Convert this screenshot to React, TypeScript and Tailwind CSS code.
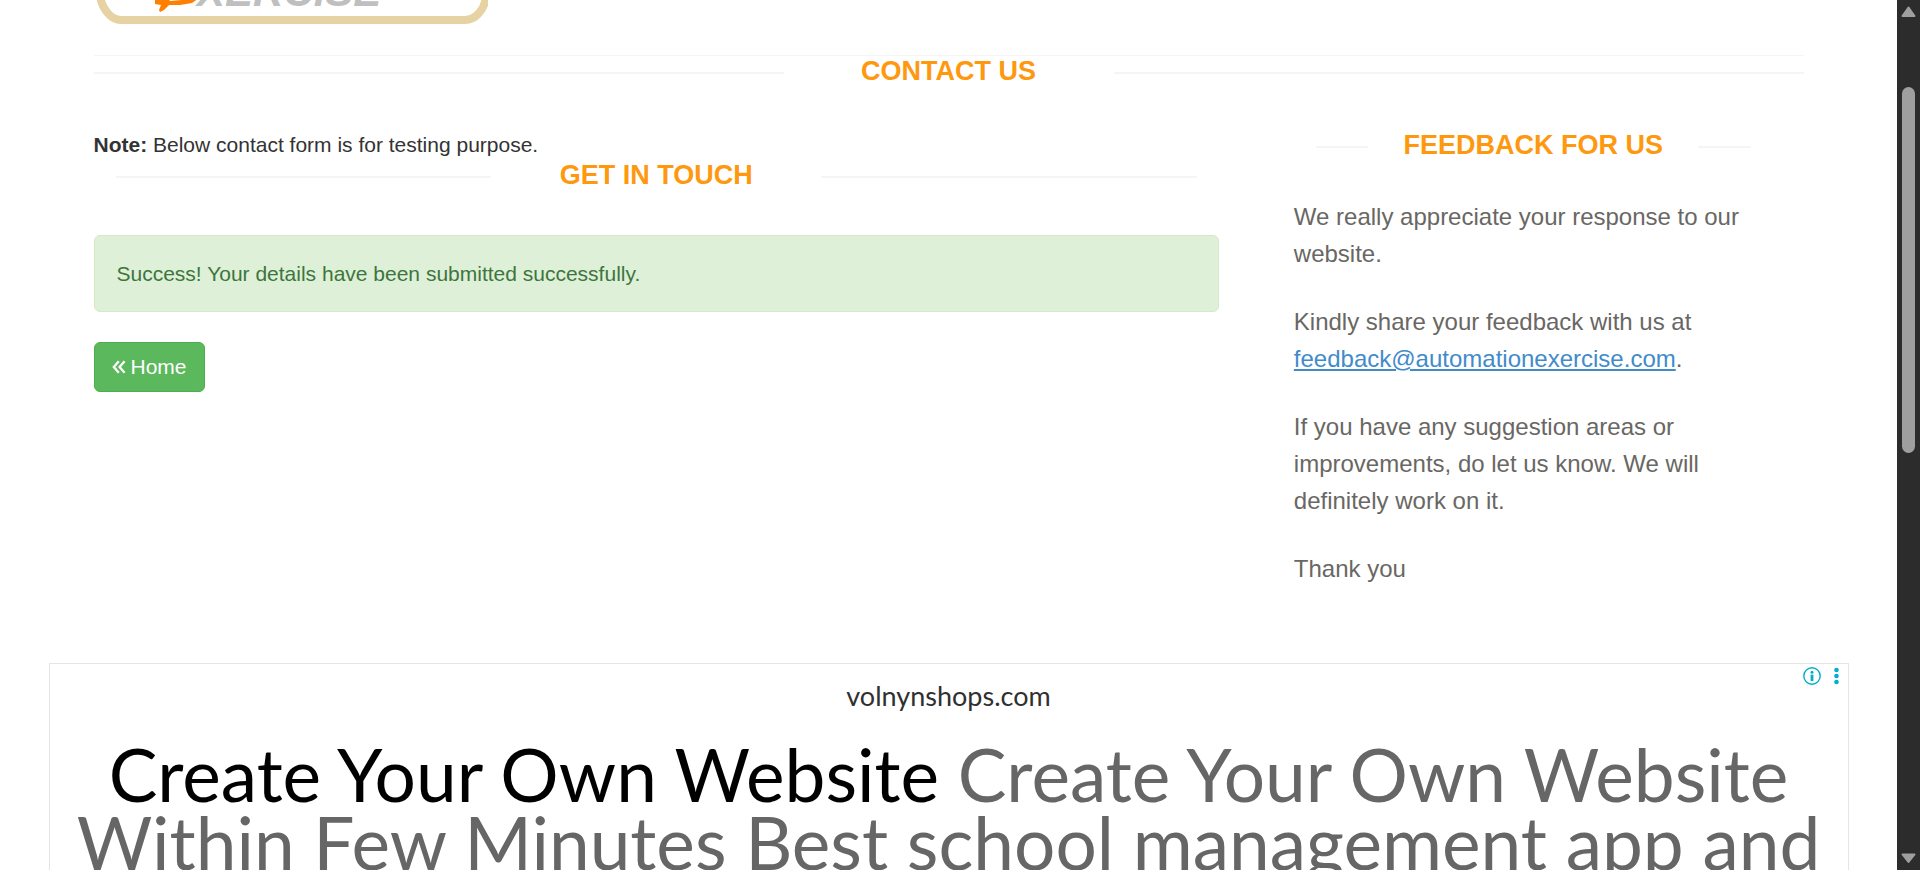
import type { ReactNode } from "react";

function SectionTitle({ children }: { children: ReactNode }) {
  return (
    <div className="flex h-[30px] items-end">
      <span className="mb-3 h-[2px] flex-1 bg-[#f5f5f5]" />
      <h2 className="w-[330px] text-center text-[27px] leading-[30px] font-bold text-[#fe980f] uppercase">
        {children}
      </h2>
      <span className="mb-3 h-[2px] flex-1 bg-[#f5f5f5]" />
    </div>
  );
}

function Logo() {
  return (
    <svg
      className="block"
      width="394"
      height="26"
      viewBox="94 0 394 26"
      role="img"
      aria-label="Automation Exercise"
    >
      <path
        d="M100 -4 C102 9 111 20 121 20 H465 C475 20 485 10 486 -4"
        fill="none"
        stroke="#e6d2a3"
        strokeWidth="8"
      />
      <path
        d="M155 -2 V4 L161 5 L159 10 L160 12 L164 10 L169 5 L180 5 L192 3 L199 -2 H187 L182 0 L170 1 L168 -2 Z"
        fill="#ff7f00"
      />
      <text
        x="197"
        y="6"
        fill="#bfbfbf"
        className="font-['Liberation_Sans',Arial,sans-serif] text-[42px] font-bold italic"
      >
        XERCISE
      </text>
    </svg>
  );
}

function Scrollbar() {
  return (
    <div aria-hidden="true" className="flex w-[23px] shrink-0 flex-col items-center bg-[#2c2c2c]">
      <svg className="my-1 shrink-0" width="15" height="15" viewBox="0 0 15 15">
        <path d="M7.5 3.5 L13.5 12 H1.5 Z" fill="#9f9f9f" stroke="#9f9f9f" strokeWidth="2" strokeLinejoin="round" />
      </svg>
      <span className="grow-[64]" />
      <span className="w-[13px] grow-[366] rounded-full bg-[#9f9f9f]" />
      <span className="grow-[394]" />
      <svg className="my-1 shrink-0" width="15" height="15" viewBox="0 0 15 15">
        <path d="M7.5 11 L13.5 3.5 H1.5 Z" fill="#9f9f9f" stroke="#9f9f9f" strokeWidth="2" strokeLinejoin="round" />
      </svg>
    </div>
  );
}

export default function App() {
  return (
    <div className="flex h-screen overflow-hidden bg-white font-['Liberation_Sans',Arial,sans-serif] text-[21px] leading-[30px] text-[#333333]">
      <div className="min-w-0 flex-1 overflow-hidden">
        <div className="mx-auto max-w-[1754px]">
          <header className="mx-[22px] border-b border-[#f5f5f5] pb-[29px]">
            <Logo />
          </header>

          <main>
            <div className="mx-[22px]">
              <SectionTitle>Contact Us</SectionTitle>
            </div>

            <div className="grid grid-cols-3 pt-11">
              <section className="col-span-2 px-[22px]">
                <p>
                  <strong>Note:</strong> Below contact form is for testing purpose.
                </p>
                <div className="px-[22px]">
                  <SectionTitle>Get In Touch</SectionTitle>
                </div>
                <div
                  role="status"
                  className="mt-[45px] rounded-md border border-[#d6e9c6] bg-[#dff0d8] px-[22px] py-[22px] leading-[31px] text-[#3c763d]"
                >
                  Success! Your details have been submitted successfully.
                </div>
                <a
                  href="#home"
                  className="mt-[30px] inline-flex h-[50px] items-center gap-[5px] rounded-md border border-[#4cae4c] bg-[#5cb85c] px-[17px] text-white"
                >
                  <svg width="14" height="14" viewBox="0 0 14 14" fill="none" stroke="currentColor" strokeWidth="2.3">
                    <path d="M6.8 1.2 L1.8 7 L6.8 12.8 M12.6 1.2 L7.6 7 L12.6 12.8" />
                  </svg>
                  Home
                </a>
              </section>

              <section className="px-[53px]">
                <div className="px-[22px]">
                  <SectionTitle>Feedback For Us</SectionTitle>
                </div>
                <div className="flex flex-col gap-[31px] pt-[38px] text-[24px] leading-[37px] text-[#696763]">
                  <p>We really appreciate your response to our website.</p>
                  <p>
                    Kindly share your feedback with us at{" "}
                    <a href="mailto:feedback@automationexercise.com" className="text-[#428bca] underline">
                      feedback@automationexercise.com
                    </a>
                    .
                  </p>
                  <p>
                    If you have any suggestion areas or improvements, do let us know. We will definitely work on it.
                  </p>
                  <p>Thank you</p>
                </div>
              </section>
            </div>
          </main>
        </div>

        <aside className="relative mx-auto mt-[76px] max-w-[1800px] border border-[#e5e5e5] px-3 pb-10 text-center font-[Lato,sans-serif]">
          <div className="absolute top-[3px] right-1.5 flex items-center gap-2.5">
            <button type="button" aria-label="About this ad">
              <svg className="block" width="18" height="18" viewBox="0 0 18 18" fill="#00aecd">
                <circle cx="9" cy="9" r="8.2" fill="none" stroke="#00aecd" strokeWidth="1.4" />
                <circle cx="9" cy="5.2" r="1.5" />
                <path d="M7.6 7.6 H10.4 V14 H7.6 Z" />
              </svg>
            </button>
            <button type="button" aria-label="Ad options">
              <svg className="block" width="11" height="18" viewBox="0 0 11 18" fill="#00aecd">
                <circle cx="5.5" cy="3" r="2.3" />
                <circle cx="5.5" cy="9" r="2.3" />
                <circle cx="5.5" cy="15" r="2.3" />
              </svg>
            </button>
          </div>
          <p className="pt-[15px] text-[27px] leading-[34px] text-[#303030]">volnynshops.com</p>
          <p className="pt-[27px] text-[73px] leading-[68px] text-[#666666]">
            <span className="text-black">Create Your Own Website</span> Create Your Own Website Within Few Minutes Best
            school management app and
          </p>
        </aside>
      </div>
      <Scrollbar />
    </div>
  );
}
